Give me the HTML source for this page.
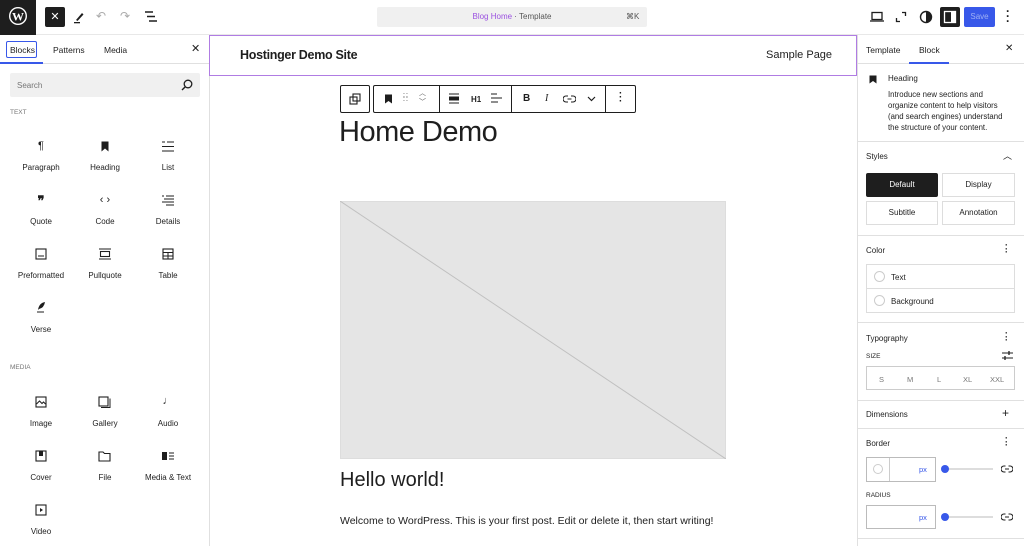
<!DOCTYPE html>
<html><head><style>
*{box-sizing:border-box;margin:0;padding:0}
body{width:1024px;height:546px;overflow:hidden;font-family:"Liberation Sans",sans-serif;background:#fff;position:relative;color:#1e1e1e}
.a{position:absolute}
.t{font-size:8px;color:#1e1e1e;text-align:center;width:64px}
.ic{font-size:11px;text-align:center;width:64px}
.btn{position:absolute;border:1px solid #ddd;font-size:8px;text-align:center;background:#fff}
</style></head><body>
<!-- top bar -->
<div class="a" style="left:0;top:0;width:1024px;height:35px;border-bottom:1px solid #e8e8e8;background:#fff"></div>
<div class="a" style="left:0;top:0;width:36px;height:35px;background:#1e1e1e"></div>
<svg class="a" style="left:8px;top:6px" width="20" height="20" viewBox="0 0 20 20"><circle cx="10" cy="10" r="9" fill="#fff"/><circle cx="10" cy="10" r="7.6" fill="#1e1e1e"/><text x="10" y="14.5" font-size="12" font-weight="bold" fill="#fff" text-anchor="middle" font-family="Liberation Serif">W</text></svg>
<div class="a" style="left:45px;top:7px;width:20px;height:20px;background:#1e1e1e;border-radius:2px;color:#fff;font-size:11px;text-align:center;line-height:20px">✕</div>
<svg class="a" style="left:73px;top:10px" width="12" height="14"><path d="M3 10 L9 3 L10.5 4.5 L4.5 11Z" fill="#1e1e1e"/><rect x="1" y="12" width="6" height="1.3" fill="#1e1e1e"/></svg>
<div class="a" style="left:96px;top:9px;font-size:12px;color:#aaa">↶</div>
<div class="a" style="left:120px;top:9px;font-size:12px;color:#aaa">↷</div>
<svg class="a" style="left:144px;top:11px" width="14" height="12"><path d="M1 1h8M3 5.5h8M5 10h8" stroke="#1e1e1e" stroke-width="1.4"/></svg>
<div class="a" style="left:377px;top:7px;width:270px;height:20px;background:#f0f0f0;border-radius:2px"></div>
<div class="a" style="left:377px;top:12px;width:270px;text-align:center;font-size:8px;color:#555"><span style="color:#9b51e0">Blog Home</span> · Template</div>
<div class="a" style="left:626px;top:12px;font-size:8px;color:#555">⌘K</div>
<svg class="a" style="left:870px;top:11px" width="14" height="12"><rect x="2" y="1.5" width="10" height="7" fill="none" stroke="#1e1e1e" stroke-width="1.3"/><path d="M0 10h14" stroke="#1e1e1e" stroke-width="1.3"/></svg>
<svg class="a" style="left:895px;top:11px" width="12" height="12"><path d="M7 1.5h3.5v3.5M1.5 7v3.5h3.5" fill="none" stroke="#1e1e1e" stroke-width="1.3"/></svg>
<svg class="a" style="left:919px;top:10px" width="14" height="14"><circle cx="7" cy="7" r="5.5" fill="none" stroke="#1e1e1e" stroke-width="1.4"/><path d="M7 1.5a5.5 5.5 0 0 1 0 11z" fill="#1e1e1e"/></svg>
<div class="a" style="left:940px;top:7px;width:20px;height:20px;background:#1e1e1e;border-radius:2px"></div>
<svg class="a" style="left:943px;top:10px" width="14" height="14"><rect x="1.5" y="1.5" width="11" height="11" fill="none" stroke="#fff" stroke-width="1.3"/><rect x="8" y="2" width="4" height="10" fill="#fff"/></svg>
<div class="a" style="left:964px;top:7px;width:31px;height:20px;background:#3858e9;border-radius:2px;color:#9fb0f4;font-size:8px;text-align:center;line-height:20px">Save</div>
<div class="a" style="left:1006px;top:9px;font-size:12px;font-weight:bold;line-height:5px;color:#1e1e1e">·<br>·<br>·</div>

<!-- left panel -->
<div class="a" style="left:209px;top:35px;width:1px;height:511px;background:#e0e0e0"></div>
<div class="a" style="left:0;top:63px;width:209px;height:1px;background:#e0e0e0"></div>
<div class="a" style="left:6px;top:41px;width:31px;height:17px;border:1.5px solid #3858e9;border-radius:2px"></div>
<div class="a" style="left:0;top:62px;width:43px;height:1.5px;background:#3858e9"></div>
<div class="a" style="left:10px;top:45px;font-size:8.5px">Blocks</div>
<div class="a" style="left:53px;top:45px;font-size:8.5px">Patterns</div>
<div class="a" style="left:104px;top:45px;font-size:8.5px">Media</div>
<div class="a" style="left:191px;top:42px;font-size:11px">✕</div>
<div class="a" style="left:10px;top:73px;width:190px;height:24px;background:#f0f0f0;border-radius:2px"></div>
<div class="a" style="left:17px;top:81px;font-size:8px;color:#757575">Search</div>
<svg class="a" style="left:181px;top:79px" width="12" height="12"><circle cx="7" cy="5" r="3.8" fill="none" stroke="#1e1e1e" stroke-width="1.3"/><path d="M4.3 7.7 1 11" stroke="#1e1e1e" stroke-width="1.4"/></svg>
<div class="a" style="left:10px;top:109px;font-size:6.5px;color:#757575">TEXT</div>
<div class="a" style="left:10px;top:364px;font-size:6.5px;color:#757575">MEDIA</div>

<div class="a ic" style="left:9px;top:140px">¶</div><div class="a t" style="left:9px;top:163px">Paragraph</div>
<svg class="a" style="left:100px;top:141px" width="10" height="11"><path d="M1.5 0.5h7v10l-3.5-3-3.5 3z" fill="#1e1e1e"/></svg><div class="a t" style="left:73px;top:163px">Heading</div>
<svg class="a" style="left:162px;top:141px" width="12" height="11"><path d="M0 1h3M5 1h7M0 5.5h12M0 10h12" stroke="#1e1e1e" stroke-width="1.1"/></svg><div class="a t" style="left:136px;top:163px">List</div>

<div class="a ic" style="left:9px;top:193px;font-weight:bold;font-size:13px">❞</div><div class="a t" style="left:9px;top:217px">Quote</div>
<div class="a ic" style="left:73px;top:194px">‹ ›</div><div class="a t" style="left:73px;top:217px">Code</div>
<svg class="a" style="left:162px;top:195px" width="12" height="11"><path d="M0 1h2M4 1h8M2 4h10M0 7h12M4 10h8" stroke="#1e1e1e" stroke-width="1.1"/></svg><div class="a t" style="left:136px;top:217px">Details</div>

<svg class="a" style="left:35px;top:248px" width="12" height="12"><rect x="1" y="1" width="10" height="10" fill="none" stroke="#1e1e1e" stroke-width="1.1"/><path d="M3 8h6" stroke="#1e1e1e"/></svg><div class="a t" style="left:9px;top:271px">Preformatted</div>
<svg class="a" style="left:99px;top:248px" width="12" height="12"><path d="M0 1h12M0 11h12" stroke="#1e1e1e" stroke-width="1.1"/><rect x="1.5" y="3.5" width="9" height="5" fill="none" stroke="#1e1e1e" stroke-width="1.1"/></svg><div class="a t" style="left:73px;top:271px">Pullquote</div>
<svg class="a" style="left:162px;top:248px" width="12" height="12"><rect x="1" y="1" width="10" height="10" fill="none" stroke="#1e1e1e" stroke-width="1.1"/><path d="M1 4.5h10M6 4.5v6.5M1 8h10" stroke="#1e1e1e"/></svg><div class="a t" style="left:136px;top:271px">Table</div>

<svg class="a" style="left:36px;top:301px" width="10" height="12"><path d="M2 9 Q3 2 9 1 Q8 7 3 8z" fill="#1e1e1e"/><path d="M1 11h7" stroke="#1e1e1e"/></svg><div class="a t" style="left:9px;top:325px">Verse</div>

<svg class="a" style="left:35px;top:396px" width="12" height="12"><rect x="1" y="1" width="10" height="10" fill="none" stroke="#1e1e1e" stroke-width="1.1"/><path d="M1.5 8l3-3 2.5 2.5 1.5-1.5 2 2" fill="none" stroke="#1e1e1e"/></svg><div class="a t" style="left:9px;top:419px">Image</div>
<svg class="a" style="left:98px;top:396px" width="13" height="12"><rect x="1" y="1" width="9" height="9" fill="none" stroke="#1e1e1e" stroke-width="1.1"/><path d="M3 11.5h9v-9" fill="none" stroke="#1e1e1e"/></svg><div class="a t" style="left:73px;top:419px">Gallery</div>
<div class="a ic" style="left:136px;top:395px">♩</div><div class="a t" style="left:136px;top:419px">Audio</div>

<svg class="a" style="left:35px;top:450px" width="12" height="12"><rect x="1" y="1" width="10" height="10" fill="none" stroke="#1e1e1e" stroke-width="1.1"/><rect x="4" y="1" width="4" height="5" fill="#1e1e1e"/></svg><div class="a t" style="left:9px;top:473px">Cover</div>
<svg class="a" style="left:98px;top:450px" width="13" height="12"><path d="M1 2h4l1.5 1.5H12V11H1z" fill="none" stroke="#1e1e1e" stroke-width="1.1"/></svg><div class="a t" style="left:73px;top:473px">File</div>
<svg class="a" style="left:162px;top:451px" width="13" height="10"><rect x="0" y="1" width="5" height="8" fill="#1e1e1e"/><path d="M7 2h5M7 5h5M7 8h5" stroke="#1e1e1e"/></svg><div class="a t" style="left:136px;top:473px">Media &amp; Text</div>

<svg class="a" style="left:35px;top:504px" width="12" height="12"><rect x="1" y="1" width="10" height="10" fill="none" stroke="#1e1e1e" stroke-width="1.1"/><path d="M5 4l3 2-3 2z" fill="#1e1e1e"/></svg><div class="a t" style="left:9px;top:527px">Video</div>

<!-- canvas -->
<div class="a" style="left:209px;top:35px;width:648px;height:41px;border:1.5px solid #b07ce3"></div>
<div class="a" style="left:240px;top:48px;font-size:12.5px;font-weight:bold;letter-spacing:-0.3px">Hostinger Demo Site</div>
<div class="a" style="left:766px;top:49px;font-size:11px">Sample Page</div>

<div class="a" style="left:340px;top:85px;width:30px;height:28px;border:1px solid #1e1e1e;border-radius:2px"></div>
<svg class="a" style="left:349px;top:93px" width="12" height="12"><rect x="1" y="4" width="7" height="7" fill="none" stroke="#1e1e1e" stroke-width="1.1"/><rect x="4" y="1" width="7" height="7" fill="none" stroke="#1e1e1e" stroke-width="1.1"/></svg>
<div class="a" style="left:373px;top:85px;width:263px;height:28px;border:1px solid #1e1e1e;border-radius:2px"></div>
<div class="a" style="left:439px;top:86px;width:1px;height:26px;background:#1e1e1e"></div>
<div class="a" style="left:511px;top:86px;width:1px;height:26px;background:#1e1e1e"></div>
<div class="a" style="left:605px;top:86px;width:1px;height:26px;background:#1e1e1e"></div>
<svg class="a" style="left:384px;top:94px" width="9" height="10"><path d="M1 0.5h7v9L4.5 7 1 9.5z" fill="#1e1e1e"/></svg>
<div class="a" style="left:403px;top:94px;font-size:7px;line-height:4px;color:#1e1e1e;letter-spacing:1px">::<br>::</div>
<div class="a" style="left:419px;top:89px;font-size:7px;line-height:9px;color:#555">︿<br>﹀</div>
<svg class="a" style="left:449px;top:93px" width="10" height="11"><path d="M0 1h10M0 10h10" stroke="#1e1e1e"/><rect x="0" y="3.5" width="10" height="4" fill="#1e1e1e"/></svg>
<div class="a" style="left:471px;top:95px;font-size:8px;font-weight:bold">H1</div>
<svg class="a" style="left:491px;top:93px" width="11" height="11"><path d="M0 1h6M0 5h11M0 9h7" stroke="#1e1e1e"/></svg>
<div class="a" style="left:523px;top:93px;font-size:10px;font-weight:bold">B</div>
<div class="a" style="left:545px;top:93px;font-size:10px;font-style:italic;font-family:'Liberation Serif'">I</div>
<svg class="a" style="left:563px;top:95px" width="13" height="8"><path d="M5 1H3a3 3 0 0 0 0 6h2M8 1h2a3 3 0 0 1 0 6H8M4.5 4h4" fill="none" stroke="#1e1e1e" stroke-width="1.1"/></svg>
<svg class="a" style="left:587px;top:96px" width="9" height="6"><path d="M1 1l3.5 3.5L8 1" fill="none" stroke="#1e1e1e" stroke-width="1.2"/></svg>
<div class="a" style="left:619px;top:92px;font-size:10px;font-weight:bold;line-height:4px">·<br>·<br>·</div>

<div class="a" style="left:339px;top:116px;font-size:29px;letter-spacing:-0.5px">Home Demo</div>
<div class="a" style="left:340px;top:201px;width:386px;height:258px;background:#e5e5e5;border:1px solid #ddd"></div>
<svg class="a" style="left:340px;top:201px" width="386" height="258"><line x1="0" y1="0" x2="386" y2="258" stroke="#c0c0c0" stroke-width="1"/></svg>
<div class="a" style="left:340px;top:469px;font-size:20px">Hello world!</div>
<div class="a" style="left:340px;top:515px;font-size:10.5px">Welcome to WordPress. This is your first post. Edit or delete it, then start writing!</div>

<!-- right panel -->
<div class="a" style="left:857px;top:35px;width:1px;height:511px;background:#e0e0e0"></div>
<div class="a" style="left:858px;top:63px;width:166px;height:1px;background:#e0e0e0"></div>
<div class="a" style="left:866px;top:45px;font-size:8.5px">Template</div>
<div class="a" style="left:919px;top:45px;font-size:8.5px">Block</div>
<div class="a" style="left:909px;top:62px;width:40px;height:1.5px;background:#3858e9"></div>
<div class="a" style="left:1005px;top:43px;font-size:10px">✕</div>
<svg class="a" style="left:869px;top:75px" width="8" height="9"><path d="M0.5 0.5h7v8L4 6 0.5 8.5z" fill="#1e1e1e"/></svg>
<div class="a" style="left:888px;top:74px;font-size:8px">Heading</div>
<div class="a" style="left:888px;top:89px;font-size:7.8px;line-height:11px;white-space:nowrap">Introduce new sections and<br>organize content to help visitors<br>(and search engines) understand<br>the structure of your content.</div>
<div class="a" style="left:858px;top:141px;width:166px;height:1px;background:#e0e0e0"></div>
<div class="a" style="left:866px;top:152px;font-size:8px">Styles</div>
<div class="a" style="left:1003px;top:149px;font-size:9px">︿</div>
<div class="btn" style="left:866px;top:173px;width:72px;height:24px;background:#1e1e1e;color:#fff;line-height:22px;border-color:#1e1e1e;border-radius:2px">Default</div>
<div class="btn" style="left:942px;top:173px;width:73px;height:24px;line-height:22px">Display</div>
<div class="btn" style="left:866px;top:201px;width:72px;height:24px;line-height:22px">Subtitle</div>
<div class="btn" style="left:942px;top:201px;width:73px;height:24px;line-height:22px">Annotation</div>
<div class="a" style="left:858px;top:235px;width:166px;height:1px;background:#e0e0e0"></div>
<div class="a" style="left:866px;top:246px;font-size:8px">Color</div>
<div class="a" style="left:1005px;top:244px;font-size:9px;font-weight:bold;line-height:3.5px">·<br>·<br>·</div>
<div class="btn" style="left:866px;top:264px;width:149px;height:25px"></div>
<div class="btn" style="left:866px;top:288px;width:149px;height:25px"></div>
<div class="a" style="left:874px;top:271px;width:11px;height:11px;border:1px solid #ccc;border-radius:50%"></div>
<div class="a" style="left:874px;top:295px;width:11px;height:11px;border:1px solid #ccc;border-radius:50%"></div>
<div class="a" style="left:891px;top:273px;font-size:8px">Text</div>
<div class="a" style="left:891px;top:297px;font-size:8px">Background</div>
<div class="a" style="left:858px;top:322px;width:166px;height:1px;background:#e0e0e0"></div>
<div class="a" style="left:866px;top:334px;font-size:8px">Typography</div>
<div class="a" style="left:1005px;top:332px;font-size:9px;font-weight:bold;line-height:3.5px">·<br>·<br>·</div>
<div class="a" style="left:866px;top:353px;font-size:6.5px">SIZE</div>
<svg class="a" style="left:1002px;top:351px" width="11" height="9"><path d="M0 2h11M0 7h11" stroke="#1e1e1e"/><path d="M7 0v4M3 5v4" stroke="#1e1e1e" stroke-width="1.3"/></svg>
<div class="btn" style="left:866px;top:366px;width:149px;height:24px;border-color:#ccc"></div>
<div class="a" style="left:879px;top:375px;font-size:7.5px;color:#777">S</div>
<div class="a" style="left:907px;top:375px;font-size:7.5px;color:#777">M</div>
<div class="a" style="left:937px;top:375px;font-size:7.5px;color:#777">L</div>
<div class="a" style="left:963px;top:375px;font-size:7.5px;color:#777">XL</div>
<div class="a" style="left:990px;top:375px;font-size:7.5px;color:#777">XXL</div>
<div class="a" style="left:858px;top:400px;width:166px;height:1px;background:#e0e0e0"></div>
<div class="a" style="left:866px;top:410px;font-size:8px">Dimensions</div>
<div class="a" style="left:1002px;top:406px;font-size:12px">+</div>
<div class="a" style="left:858px;top:428px;width:166px;height:1px;background:#e0e0e0"></div>
<div class="a" style="left:866px;top:439px;font-size:8px">Border</div>
<div class="a" style="left:1005px;top:437px;font-size:9px;font-weight:bold;line-height:3.5px">·<br>·<br>·</div>
<div class="btn" style="left:866px;top:457px;width:70px;height:25px;border-color:#bbb"></div>
<div class="a" style="left:889px;top:458px;width:1px;height:23px;background:#ccc"></div>
<div class="a" style="left:873px;top:464px;width:10px;height:10px;border:1px solid #ccc;border-radius:50%"></div>
<div class="a" style="left:919px;top:465px;font-size:7.5px;color:#3858e9">px</div>
<div class="a" style="left:944px;top:468px;width:49px;height:2px;background:#ddd"></div>
<div class="a" style="left:941px;top:465px;width:8px;height:8px;background:#3858e9;border-radius:50%"></div>
<svg class="a" style="left:1001px;top:465px" width="12" height="8"><path d="M4.5 1H3a3 3 0 0 0 0 6h1.5M7.5 1H9a3 3 0 0 1 0 6H7.5M4 4h4" fill="none" stroke="#1e1e1e" stroke-width="1.1"/></svg>
<div class="a" style="left:866px;top:492px;font-size:6.5px">RADIUS</div>
<div class="btn" style="left:866px;top:505px;width:70px;height:24px;border-color:#bbb"></div>
<div class="a" style="left:919px;top:513px;font-size:7.5px;color:#3858e9">px</div>
<div class="a" style="left:944px;top:516px;width:49px;height:2px;background:#ddd"></div>
<div class="a" style="left:941px;top:513px;width:8px;height:8px;background:#3858e9;border-radius:50%"></div>
<svg class="a" style="left:1001px;top:513px" width="12" height="8"><path d="M4.5 1H3a3 3 0 0 0 0 6h1.5M7.5 1H9a3 3 0 0 1 0 6H7.5M4 4h4" fill="none" stroke="#1e1e1e" stroke-width="1.1"/></svg>
<div class="a" style="left:858px;top:538px;width:166px;height:1px;background:#e0e0e0"></div>
</body></html>
